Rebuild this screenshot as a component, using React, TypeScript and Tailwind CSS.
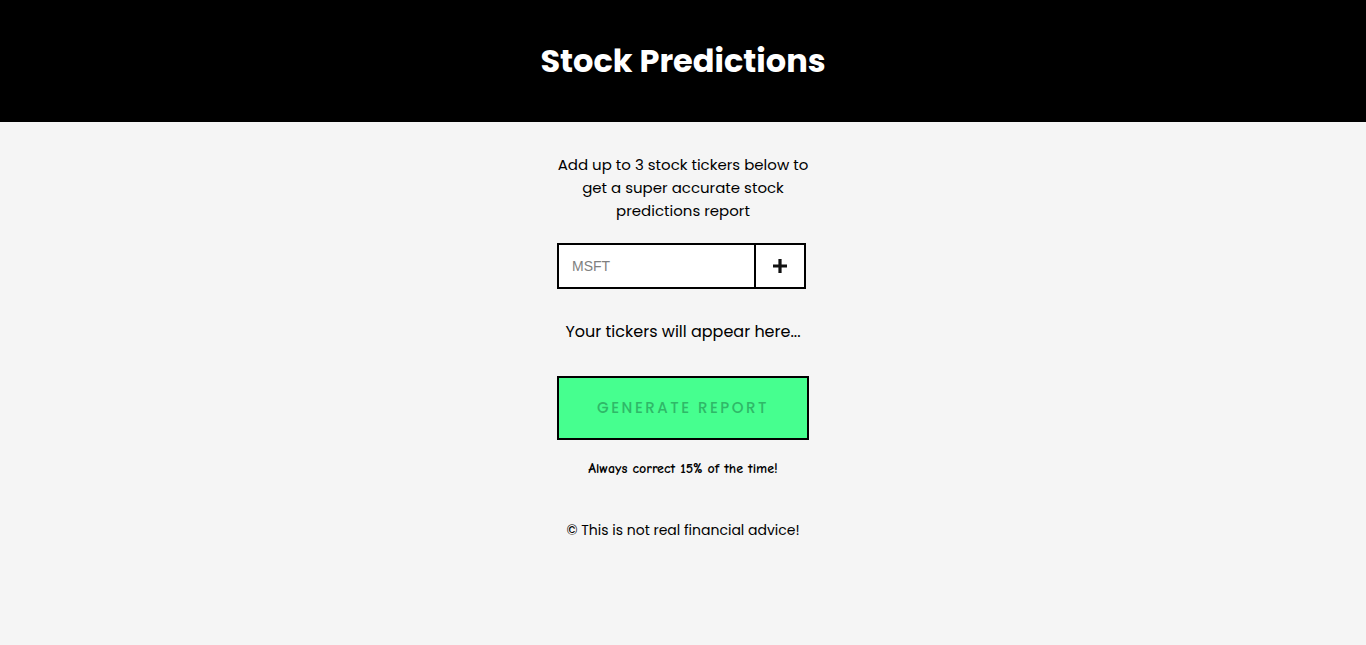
export default function App() {
  return (
    <div className="min-h-screen bg-[#f5f5f5] font-['Poppins','Inter',sans-serif] text-black">
      <header className="flex h-[122px] items-center justify-center bg-black">
        <h1 className="text-[32px] font-bold text-white">Stock Predictions</h1>
      </header>
      <main className="flex flex-col items-center">
        <p className="mt-[31px] w-[260px] text-center text-[15px] leading-[23px]">
          Add up to 3 stock tickers below to get a super accurate stock predictions report
        </p>
        <form className="mt-[21px] mr-[3px] flex h-[46px] w-[249px] border-2 border-black bg-white" onSubmit={(e) => e.preventDefault()}>
          <input
            type="text"
            placeholder="MSFT"
            className="h-full min-w-0 flex-1 bg-white px-[13px] font-['Liberation_Sans',Arial,sans-serif] text-[14px] outline-none placeholder:text-[#7f7f7f]"
          />
          <button type="submit" className="flex w-[50px] items-center justify-center border-l-2 border-black bg-white">
            <svg width="16" height="16" viewBox="0 0 16 16">
              <path d="M8 1v14M1 8h14" stroke="#111" strokeWidth="3.2" />
            </svg>
          </button>
        </form>
        <p className="mt-[31px] text-[16px] leading-[24px]">Your tickers will appear here...</p>
        <button
          disabled
          className="mt-[32px] h-[64px] w-[252px] border-2 border-black bg-[#46ff8f] text-[15px] font-medium uppercase tracking-[2.5px] text-[#2fb868]"
        >
          Generate Report
        </button>
        <p className="mt-[18px] font-['Comic_Sans_MS','Comic_Neue','DejaVu_Sans',cursive] text-[14px] font-bold">
          Always correct 15% of the time!
        </p>
        <footer className="mt-[41px] text-[14px]">© This is not real financial advice!</footer>
      </main>
    </div>
  );
}
